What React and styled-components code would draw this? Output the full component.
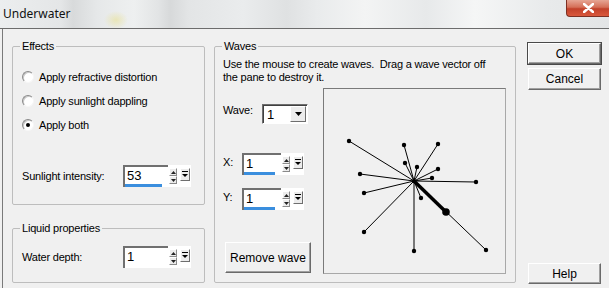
import React from 'react';
import styled, { createGlobalStyle } from 'styled-components';

const Global = createGlobalStyle`
  html, body {
    margin: 0;
    padding: 0;
    background: #f0f0f0;
  }
  body {
    width: 609px;
    height: 288px;
    overflow: hidden;
    font-family: "Liberation Sans", Arial, sans-serif;
    font-size: 11px;
    letter-spacing: -0.2px;
    color: #000;
  }
`;

const Window = styled.div`
  width: 609px;
  height: 288px;
  display: flex;
  flex-direction: column;
  overflow: hidden;
`;

const TitleBar = styled.div`
  height: 28px;
  flex-shrink: 0;
  display: flex;
  align-items: flex-start;
  border-bottom: 1px solid #6c6c6c;
  background:
    radial-gradient(ellipse 12px 9px at 116px 20px, rgba(232, 224, 140, 0.55), rgba(232, 224, 140, 0) 100%),
    linear-gradient(90deg,
      #eceeef 0%, #e4e6e7 10%, #d8dadb 12%, #e6e8e9 16%, #eef0f0 22%,
      #e2e4e5 26%, #d7d9da 28%, #e3e5e6 31%, #eaeced 40%, #dfe1e2 47%,
      #e9ebec 52%, #f3f4f4 60%, #e7e9ea 70%, #f5f6f6 78%, #e8eaeb 90%, #e3e5e6 100%);
`;

const Caption = styled.span`
  font-family: "Noto Sans", "Open Sans", sans-serif;
  font-size: 12px;
  letter-spacing: 0;
  line-height: 28px;
  padding-left: 3px;
  color: #111;
`;

const CloseBox = styled.div`
  margin-left: auto;
  width: 43px;
  height: 17px;
  box-sizing: border-box;
  border: 1px solid #7d3023;
  border-top: none;
  border-right: none;
  border-radius: 0 0 0 4px;
  background: linear-gradient(#e6a594 0%, #d56f58 45%, #c2412a 55%, #d9583c 100%);
  display: flex;
  align-items: center;
  justify-content: center;
`;

const Body = styled.div`
  flex: 1;
  display: flex;
  margin-left: 2px;
  border-left: 1px solid #7a7a7a;
  padding: 11px 0 4px 9px;
  box-sizing: border-box;
`;

const Column = styled.div`
  display: flex;
  flex-direction: column;
  width: 193px;
`;

const Group = styled.fieldset`
  margin: 0;
  margin-top: ${p => p.$top || 0}px;
  margin-left: ${p => p.$left || 0}px;
  padding: 0;
  width: ${p => p.$w}px;
  height: ${p => p.$h}px;
  box-sizing: border-box;
  border: 1px solid #bdbdbd;
  border-radius: 2px;
  min-width: 0;
`;

const Legend = styled.legend`
  margin-left: 7px;
  padding: 0 2px;
  line-height: 13px;
`;

const Radios = styled.div`
  display: flex;
  flex-direction: column;
  padding: 12px 0 0 9px;
`;

const RadioRow = styled.label`
  height: 24px;
  display: flex;
  align-items: center;
  gap: 5px;
`;

const RadioDot = styled.span`
  width: 12px;
  height: 12px;
  box-sizing: border-box;
  border-radius: 50%;
  border: 1px solid;
  border-color: #8a8a8a #f6f6f6 #f6f6f6 #8a8a8a;
  background: #fff;
  box-shadow: inset 1px 1px 0 #c9c9c9;
  display: flex;
  align-items: center;
  justify-content: center;
  &::after {
    content: "";
    width: 4px;
    height: 4px;
    border-radius: 50%;
    background: ${p => (p.$on ? '#000' : 'transparent')};
  }
`;

const FieldRow = styled.div`
  display: flex;
  align-items: center;
  padding-left: ${p => (p.$flush ? 0 : 9)}px;
  margin-top: ${p => p.$top}px;
`;

const FieldLabel = styled.span`
  width: ${p => p.$w}px;
  flex-shrink: 0;
  margin-top: ${p => p.$dy || 0}px;
  align-self: ${p => (p.$dy !== undefined ? 'flex-start' : 'auto')};
`;

const Spin = styled.div`
  width: ${p => p.$w}px;
  height: 22px;
  box-sizing: border-box;
  display: flex;
  align-items: flex-start;
  background: #fff;
`;

const SpinField = styled.div`
  flex: 1;
  align-self: stretch;
  box-sizing: border-box;
  border-left: 2px solid #707070;
  border-top: 2px solid #707070;
  padding: 2px 0 0 2px;
  font-size: 13px;
  letter-spacing: 0;
  line-height: 14px;
  position: relative;
`;

const Meter = styled.div`
  position: absolute;
  left: 0;
  bottom: 0;
  height: 3px;
  background: #3a8ede;
`;

const Arrows = styled.div`
  display: flex;
  flex-direction: column;
  margin: 3px 3px 0 1px;
`;

const ArrowBtn = styled.div`
  width: 8px;
  height: 8px;
  box-sizing: border-box;
  border: 1px solid;
  border-color: #fff #8a8a8a #8a8a8a #fff;
  background: #ececec;
  display: flex;
  align-items: center;
  justify-content: center;
`;

const DropBtn = styled.div`
  width: 10px;
  height: 13px;
  margin-top: 3px;
  margin-right: 1px;
  box-sizing: border-box;
  border: 1px solid;
  border-color: #fff #6e6e6e #6e6e6e #fff;
  background: #ececec;
  display: flex;
  align-items: center;
  justify-content: center;
`;

const Waves = styled.div`
  padding: 5px 0 0 8px;
  display: flex;
  flex-direction: column;
`;

const Note = styled.div`
  line-height: 13px;
  width: 272px;
`;

const WaveArea = styled.div`
  display: flex;
  margin-top: 4px;
  gap: 10px;
`;

const Controls = styled.div`
  width: 90px;
  display: flex;
  flex-direction: column;
`;

const Combo = styled.div`
  width: 46px;
  height: 20px;
  box-sizing: border-box;
  border: 1px solid;
  border-color: #6e6e6e #fff #fff #6e6e6e;
  box-shadow: inset 1px 1px 0 #404040;
  background: #fff;
  display: flex;
  align-items: center;
  padding: 1px 1px 1px 4px;
  font-size: 13px;
  letter-spacing: 0;
`;

const ComboBtn = styled.div`
  margin-left: auto;
  width: 16px;
  height: 16px;
  box-sizing: border-box;
  border: 1px solid;
  border-color: #fff #6e6e6e #6e6e6e #fff;
  background: #ececec;
  display: flex;
  align-items: center;
  justify-content: center;
`;

const Pane = styled.div`
  width: 183px;
  height: 186px;
  box-sizing: border-box;
  border: 1px solid;
  border-color: #7a7a7a #a8a8a8 #a8a8a8 #7a7a7a;
  background: #f0f0f0;
`;

const Button = styled.div`
  width: ${p => p.$w}px;
  height: ${p => p.$h || 22}px;
  box-sizing: border-box;
  margin-top: ${p => p.$top || 0}px;
  margin-left: ${p => p.$left || 0}px;
  border: 1px solid;
  border-color: #fff #6a6a6a #6a6a6a #fff;
  box-shadow: ${p => (p.$default ? '0 0 0 1px #4a4a4a, inset -1px -1px 0 #a0a0a0' : 'inset -1px -1px 0 #a0a0a0')};
  background: #f0f0f0;
  display: flex;
  align-items: center;
  justify-content: center;
  font-size: 12px;
  letter-spacing: 0;
`;

const Buttons = styled.div`
  width: 74px;
  margin-left: 12px;
  padding-top: 3px;
  display: flex;
  flex-direction: column;
  & > :last-child {
    margin-top: auto;
  }
`;

const Tri = ({ up }) => (
  <svg width="5" height="3" viewBox="0 0 5 3">
    <path d={up ? 'M2.5 0 L5 3 L0 3 Z' : 'M0 0 L5 0 L2.5 3 Z'} fill="#222" />
  </svg>
);

const DropGlyph = () => (
  <svg width="6" height="7" viewBox="0 0 6 7">
    <rect x="0" y="0" width="6" height="1" fill="#000" />
    <path d="M0 3 L6 3 L3 6 Z" fill="#000" />
  </svg>
);

const SpinBox = ({ value, width, meter }) => (
  <Spin $w={width}>
    <SpinField>
      {value}
      {meter ? <Meter style={{ width: `${meter}px` }} /> : null}
    </SpinField>
    <Arrows>
      <ArrowBtn><Tri up /></ArrowBtn>
      <ArrowBtn><Tri /></ArrowBtn>
    </Arrows>
    <DropBtn><DropGlyph /></DropBtn>
  </Spin>
);

const center = [90, 92];
const vectors = [
  [25, 52], [80, 56], [114, 55], [81, 74], [93, 78], [114, 80], [108, 89],
  [36, 85], [152, 93], [40, 104], [97, 109], [40, 143], [90, 162], [162, 161],
];

const WavePlot = () => (
  <svg width="181" height="184" viewBox="0 0 181 184">
    {vectors.map(([x, y], i) => (
      <line key={`l${i}`} x1={center[0]} y1={center[1]} x2={x} y2={y}
        stroke="#000" strokeWidth="1" />
    ))}
    <line x1={center[0]} y1={center[1]} x2={122} y2={123} stroke="#000" strokeWidth="3.5" />
    {vectors.map(([x, y], i) => (
      <circle key={`c${i}`} cx={x} cy={y} r="2.2" fill="#000" />
    ))}
    <circle cx="122" cy="123" r="3.8" fill="#000" />
    <circle cx={center[0]} cy={center[1]} r="2" fill="#000" />
  </svg>
);

export default function App() {
  return (
    <Window>
      <Global />
      <TitleBar>
        <Caption>Underwater</Caption>
        <CloseBox>
          <svg width="11" height="10" viewBox="0 0 11 10">
            <path d="M1 1 L10 9 M10 1 L1 9" stroke="#fff" strokeWidth="2.6" strokeLinecap="round" />
          </svg>
        </CloseBox>
      </TitleBar>
      <Body>
        <Column>
          <Group $w={193} $h={165}>
            <Legend>Effects</Legend>
            <Radios>
              <RadioRow><RadioDot />Apply refractive distortion</RadioRow>
              <RadioRow><RadioDot />Apply sunlight dappling</RadioRow>
              <RadioRow><RadioDot $on />Apply both</RadioRow>
            </Radios>
            <FieldRow $top={28}>
              <FieldLabel $w={101}>Sunlight intensity:</FieldLabel>
              <SpinBox value="53" width={68} meter={37} />
            </FieldRow>
          </Group>
          <Group $w={193} $h={61} $top={17}>
            <Legend>Liquid properties</Legend>
            <FieldRow $top={11}>
              <FieldLabel $w={101}>Water depth:</FieldLabel>
              <SpinBox value="1" width={68} />
            </FieldRow>
          </Group>
        </Column>
        <Group $w={302} $h={243} $left={9}>
          <Legend>Waves</Legend>
          <Waves>
            <Note>Use the mouse to create waves.&nbsp; Drag a wave vector off the pane to destroy it.</Note>
            <WaveArea>
              <Controls>
                <FieldRow $top={16} $flush>
                  <FieldLabel $w={39} $dy={0}>Wave:</FieldLabel>
                  <Combo>
                    1
                    <ComboBtn>
                      <svg width="7" height="4" viewBox="0 0 7 4"><path d="M0 0 L7 0 L3.5 4 Z" fill="#000" /></svg>
                    </ComboBtn>
                  </Combo>
                </FieldRow>
                <FieldRow $top={29} $flush>
                  <FieldLabel $w={19} $dy={3}>X:</FieldLabel>
                  <SpinBox value="1" width={62} meter={31} />
                </FieldRow>
                <FieldRow $top={13} $flush>
                  <FieldLabel $w={19} $dy={3}>Y:</FieldLabel>
                  <SpinBox value="1" width={62} meter={31} />
                </FieldRow>
                <Button $w={86} $h={31} $top={32} $left={2}>Remove wave</Button>
              </Controls>
              <Pane><WavePlot /></Pane>
            </WaveArea>
          </Waves>
        </Group>
        <Buttons>
          <Button $w={73} $h={21} $default>OK</Button>
          <Button $w={73} $top={4}>Cancel</Button>
          <Button $w={73} $h={21}>Help</Button>
        </Buttons>
      </Body>
    </Window>
  );
}
